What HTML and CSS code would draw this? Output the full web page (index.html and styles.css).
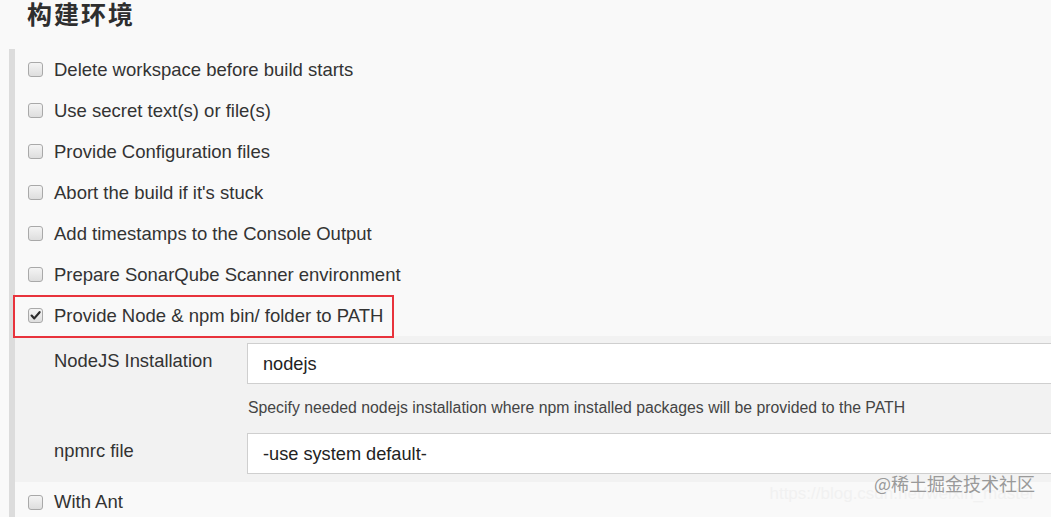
FILE: index.html
```html
<!DOCTYPE html>
<html lang="zh">
<head>
<meta charset="utf-8">
<title>构建环境</title>
<link rel="stylesheet" href="styles.css">
</head>
<body>
<h1 class="title">构建环境</h1>
<div class="section">
  <div class="row"><span class="cb"></span><span class="label">Delete workspace before build starts</span></div>
  <div class="row"><span class="cb"></span><span class="label">Use secret text(s) or file(s)</span></div>
  <div class="row"><span class="cb"></span><span class="label">Provide Configuration files</span></div>
  <div class="row"><span class="cb"></span><span class="label">Abort the build if it's stuck</span></div>
  <div class="row"><span class="cb"></span><span class="label">Add timestamps to the Console Output</span></div>
  <div class="row"><span class="cb"></span><span class="label">Prepare SonarQube Scanner environment</span></div>
  <div class="row row-marked">
    <span class="cb checked"><svg viewBox="0 0 15 15" width="15" height="15"><path d="M3.6 7.6 L6.3 10.4 L11.6 4.2" fill="none" stroke="#2b2b2b" stroke-width="2.2" stroke-linecap="round" stroke-linejoin="round"/></svg></span>
    <span class="label">Provide Node &amp; npm bin/ folder to PATH</span>
    <span class="mark"></span>
  </div>
  <div class="panel">
    <div class="field-label">NodeJS Installation</div>
    <div class="input">nodejs</div>
    <div></div>
    <div class="help">Specify needed nodejs installation where npm installed packages will be provided to the PATH</div>
    <div class="field-label">npmrc file</div>
    <div class="input">-use system default-</div>
  </div>
  <div class="row row-last"><span class="cb"></span><span class="label">With Ant</span></div>
</div>
<div class="watermark">
  <span class="wm-url">https://blog.csdn.net/weixin_master</span>
  <span class="wm-main">@稀土掘金技术社区</span>
</div>
</body>
</html>
```

FILE: styles.css
```css
html, body {
  margin: 0;
  padding: 0;
  height: 100%;
  overflow: hidden;
}
body {
  background: #f9f9f9;
  font-family: "Liberation Sans", Arial, "Noto Sans CJK SC", sans-serif;
  color: #333;
  position: relative;
}
.title {
  margin: 0;
  padding-left: 27px;
  height: 26px;
  line-height: 26px;
  font-size: 25px;
  font-weight: bold;
  color: #2e2e2e;
  font-family: "Noto Sans CJK SC", sans-serif;
  letter-spacing: 2px;
}
.section {
  margin-top: 23px;
  margin-left: 9px;
  border-left: 6px solid #dcdcdc;
}
.row {
  display: flex;
  align-items: center;
  height: 41px;
  padding-left: 13px;
  gap: 11px;
  position: relative;
}
.row-last {
  height: 40px;
}
.cb {
  width: 13px;
  height: 13px;
  border: 1px solid #a9a9a9;
  border-radius: 3px;
  background: linear-gradient(#f4f4f4, #dedede);
  flex: none;
  display: flex;
  align-items: center;
  justify-content: center;
  box-sizing: content-box;
  position: relative;
}
.cb svg {
  position: absolute;
  left: -1px;
  top: -1px;
}
.label {
  font-size: 18.5px;
  line-height: 22px;
  color: #333;
  white-space: nowrap;
}
.mark {
  position: absolute;
  left: -2px;
  top: 0;
  width: 377px;
  height: 39px;
  border: 2px solid #e8333c;
}
.panel {
  background: #f2f2f2;
  padding: 7px 0 8px 39px;
  display: grid;
  grid-template-columns: 193px 900px;
  align-items: start;
}
.field-label {
  font-size: 18.4px;
  line-height: 22px;
  padding-top: 7px;
  color: #333;
  white-space: nowrap;
}
.input {
  height: 39px;
  border: 1px solid #cfcfcf;
  background: #fff;
  font-size: 18.2px;
  line-height: 41px;
  padding-left: 15px;
  color: #222;
  white-space: nowrap;
}
.help {
  font-size: 15.8px;
  line-height: 18px;
  padding: 15px 0 16px 1px;
  color: #444;
  white-space: nowrap;
}
.watermark {
  position: absolute;
  right: 16px;
  bottom: 12px;
  width: 200px;
  height: 34px;
}
.wm-url {
  position: absolute;
  right: 0;
  top: 13px;
  font-size: 17px;
  color: #f1f1f1;
  white-space: nowrap;
}
.wm-main {
  position: absolute;
  right: 0;
  top: 0;
  font-size: 18px;
  color: #9a9a9a;
  font-family: "Noto Sans CJK SC", sans-serif;
  line-height: 24px;
  white-space: nowrap;
}
```
